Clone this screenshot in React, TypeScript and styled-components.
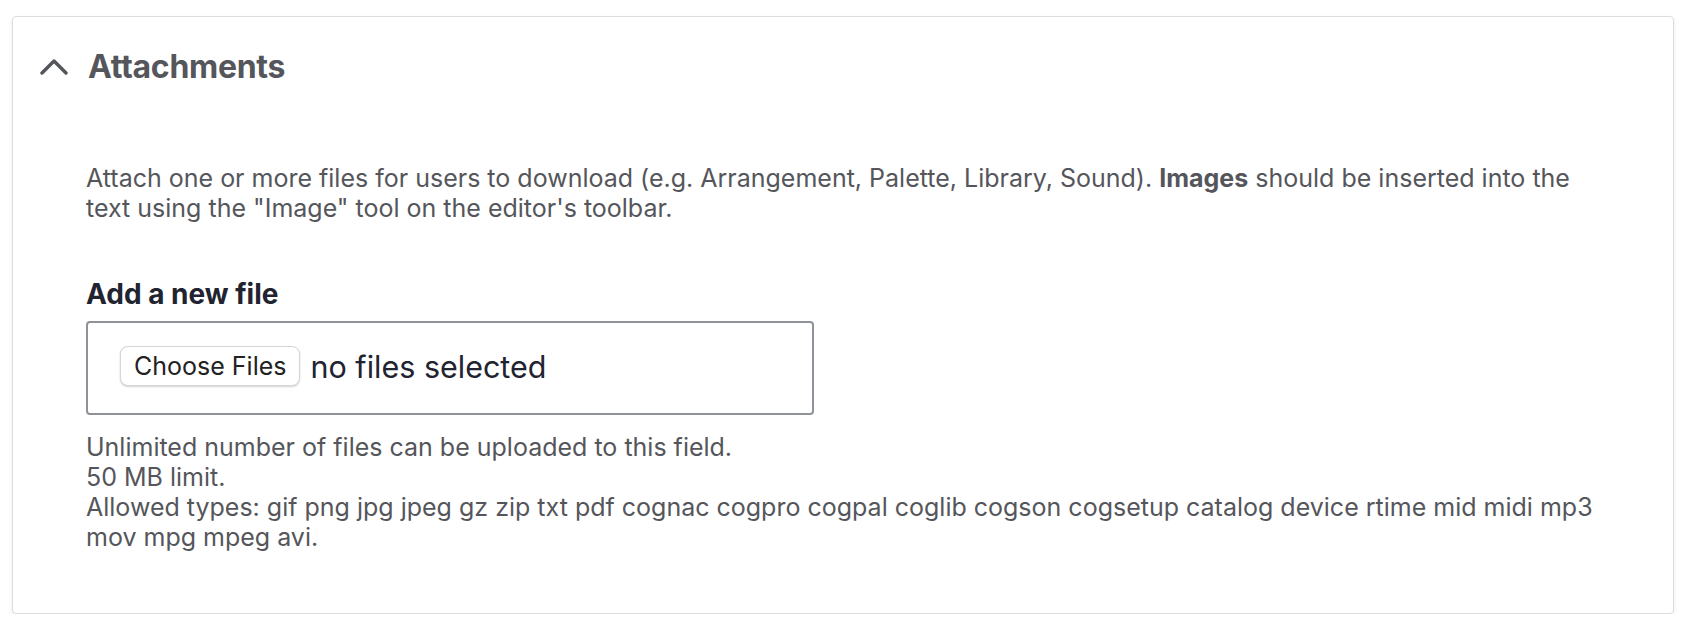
import React from "react";
import styled, { createGlobalStyle } from "styled-components";

const GlobalStyle = createGlobalStyle`
  html, body { margin: 0; padding: 0; background: #ffffff; }
  body { font-family: Inter, "Noto Sans", "Liberation Sans", sans-serif; -webkit-font-smoothing: antialiased; }
  * { box-sizing: border-box; }
`;

const Page = styled.div`
  padding: 16px 22px 0 12px;
`;

const Card = styled.details`
  border: 1px solid #dcdde2;
  border-radius: 4px;
  background: #fff;
  box-shadow: 0 2px 4px rgba(0, 0, 0, 0.08);
`;

const Summary = styled.summary`
  display: flex;
  align-items: center;
  gap: 20px;
  padding: 30px 0 30px 27px;
  list-style: none;
  cursor: pointer;
  color: #55565b;
  &::-webkit-details-marker { display: none; }
`;

const Title = styled.span`
  font-size: 32px;
  line-height: 40px;
  font-weight: 700;
  letter-spacing: -0.3px;
`;

const Body = styled.div`
  padding: 46px 74px 61px 73px;
`;

const Description = styled.div<{ $mb?: number }>`
  font-size: 25px;
  line-height: 30px;
  color: #55565b;
  margin-bottom: ${(p) => p.$mb ?? 0}px;
  b { font-weight: 700; }
`;

const Label = styled.div`
  font-size: 28px;
  line-height: 30px;
  font-weight: 700;
  color: #222330;
  margin-bottom: 12px;
`;

const FileBox = styled.div`
  width: 728px;
  height: 94px;
  border: 2px solid #8f9198;
  border-radius: 4px;
  display: flex;
  align-items: center;
  gap: 10px;
  padding: 0 0 4px 32px;
`;

const ChooseButton = styled.button`
  height: 40px;
  padding: 0 13px;
  background: #fff;
  border: 1px solid #d6d6da;
  border-radius: 8px;
  box-shadow: 0 1px 2px rgba(0, 0, 0, 0.18);
  font-family: inherit;
  font-size: 25px;
  color: #222;
`;

const FileStatus = styled.span`
  font-size: 30.5px;
  color: #222330;
`;

const Help = styled.div`
  margin-top: 17px;
`;

const Chevron = () => (
  <svg width="28" height="18" viewBox="0 0 28 18" fill="none">
    <polyline points="2,15 14,3 26,15" stroke="#55565b" strokeWidth="3.4" strokeLinecap="round" strokeLinejoin="round" />
  </svg>
);

export default function App() {
  return (
    <>
      <GlobalStyle />
      <Page>
        <Card open>
          <Summary>
            <Chevron />
            <Title>Attachments</Title>
          </Summary>
          <Body>
            <Description $mb={56}>
              Attach one or more files for users to download (e.g. Arrangement, Palette, Library, Sound). <b>Images</b> should be
              inserted into the text using the "Image" tool on the editor's toolbar.
            </Description>
            <Label>Add a new file</Label>
            <FileBox>
              <ChooseButton type="button">Choose Files</ChooseButton>
              <FileStatus>no files selected</FileStatus>
            </FileBox>
            <Help>
              <Description>Unlimited number of files can be uploaded to this field.</Description>
              <Description>50 MB limit.</Description>
              <Description>
                Allowed types: gif png jpg jpeg gz zip txt pdf cognac cogpro cogpal coglib cogson cogsetup catalog device rtime mid midi mp3 mov mpg mpeg avi.
              </Description>
            </Help>
          </Body>
        </Card>
      </Page>
    </>
  );
}
